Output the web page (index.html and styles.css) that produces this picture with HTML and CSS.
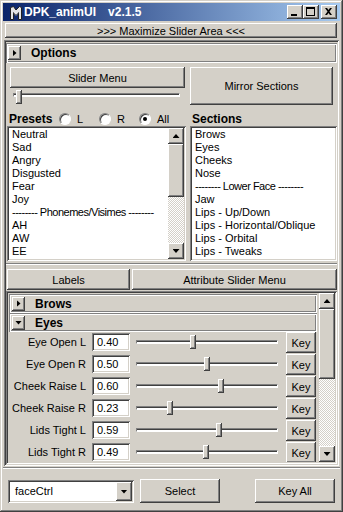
FILE: index.html
```html
<!DOCTYPE html>
<html lang="en">

<head>
    <meta charset="utf-8">
    <title>DPK_animUI v2.1.5</title>
    <link rel="stylesheet" href="styles.css">
</head>

<body>
    <div class="window">
        <!-- title bar -->
        <div class="titlebar">
            <svg class="app-icon" width="16" height="16" viewBox="0 0 16 16">
                <path d="M3.5 3.5 L6.5 2.5 L9 6 L12.5 2.5 L14.5 3.5 L14.5 15.5 L11.5 15.5 L11.5 8.5 L9 11.5 L6.5 8.5 L6.5 15.5 L3.5 15.5 Z" fill="#e4e4e4" stroke="#202020" stroke-width="1"/>
                <path d="M6.5 8.5 L9 11.5 L11.5 8.5" fill="none" stroke="#8a8a8a" stroke-width="1"/>
            </svg>
            <span class="title">DPK_animUI</span>
            <span class="title version">v2.1.5</span>
            <div class="caption">
                <span class="cap-btn">
                    <svg width="16" height="14" viewBox="0 0 16 14"><rect x="4" y="9" width="6" height="2" fill="#000"/></svg>
                </span>
                <span class="cap-btn">
                    <svg width="16" height="14" viewBox="0 0 16 14"><rect x="3.5" y="2.5" width="8" height="8" fill="none" stroke="#000"/><rect x="3" y="2" width="9" height="2" fill="#000"/></svg>
                </span>
                <span class="cap-btn close">
                    <svg width="16" height="14" viewBox="0 0 16 14"><path d="M4 3h2l1.5 2L9 3h2l-2.5 3.5L11 10H9L7.5 8 6 10H4l2.5-3.5z" fill="#000"/></svg>
                </span>
            </div>
        </div>

        <button class="btn maximize">&gt;&gt;&gt; Maximize Slider Area &lt;&lt;&lt;</button>

        <div class="pane">
            <!-- Options frame -->
            <div class="frame-head top-head">
                <span class="toggle"><i class="tri-right"></i></span>
                <b>Options</b>
            </div>
            <div class="options">
                <div class="opt-top">
                    <div class="opt-left">
                        <button class="btn slider-menu">Slider Menu</button>
                        <div class="trackbar wide">
                            <div class="track"></div>
                            <div class="thumb" style="left:6px"></div>
                        </div>
                    </div>
                    <button class="btn mirror">Mirror Sections</button>
                </div>

                <div class="list-cols">
                    <div class="list-col presets">
                        <div class="list-head">
                            <b class="head-label">Presets</b>
                            <span class="radio"><span class="circle"></span>L</span>
                            <span class="radio"><span class="circle"></span>R</span>
                            <span class="radio"><span class="circle on"></span>All</span>
                        </div>
                        <div class="listbox">
                            <ul class="items">
                                <li>Neutral</li>
                                <li>Sad</li>
                                <li>Angry</li>
                                <li>Disgusted</li>
                                <li>Fear</li>
                                <li>Joy</li>
                                <li class="sep">-------- Phonemes/Visimes --------</li>
                                <li>AH</li>
                                <li>AW</li>
                                <li>EE</li>
                            </ul>
                            <div class="vscroll list-scroll">
                                <span class="sb-btn"><i class="tri-up"></i></span>
                                <span class="sb-thumb"></span>
                                <span class="sb-track"></span>
                                <span class="sb-btn"><i class="tri-down"></i></span>
                            </div>
                        </div>
                    </div>
                    <div class="list-col sections">
                        <div class="list-head">
                            <b class="head-label">Sections</b>
                        </div>
                        <div class="listbox">
                            <ul class="items">
                                <li>Brows</li>
                                <li>Eyes</li>
                                <li>Cheeks</li>
                                <li>Nose</li>
                                <li class="sep">-------- Lower Face --------</li>
                                <li>Jaw</li>
                                <li>Lips - Up/Down</li>
                                <li>Lips - Horizontal/Oblique</li>
                                <li>Lips - Orbital</li>
                                <li>Lips - Tweaks</li>
                            </ul>
                        </div>
                    </div>
                </div>
            </div>

            <div class="tabs">
                <button class="btn tab-labels">Labels</button>
                <button class="btn tab-attr">Attribute Slider Menu</button>
            </div>

            <!-- slider area -->
            <div class="scroller">
                <div class="scroll-content">
                    <div class="frame-head sub-head">
                        <span class="toggle"><i class="tri-right"></i></span>
                        <b>Brows</b>
                    </div>
                    <div class="frame-head sub-head">
                        <span class="toggle"><i class="tri-down"></i></span>
                        <b>Eyes</b>
                    </div>

                    <div class="row">
                        <span class="row-label">Eye Open L</span>
                        <span class="field">0.40</span>
                        <div class="trackbar"><div class="track"></div><div class="thumb" style="left:54px"></div></div>
                        <button class="btn key">Key</button>
                    </div>
                    <div class="row">
                        <span class="row-label">Eye Open R</span>
                        <span class="field">0.50</span>
                        <div class="trackbar"><div class="track"></div><div class="thumb" style="left:68px"></div></div>
                        <button class="btn key">Key</button>
                    </div>
                    <div class="row">
                        <span class="row-label">Cheek Raise L</span>
                        <span class="field">0.60</span>
                        <div class="trackbar"><div class="track"></div><div class="thumb" style="left:82px"></div></div>
                        <button class="btn key">Key</button>
                    </div>
                    <div class="row">
                        <span class="row-label">Cheek Raise R</span>
                        <span class="field">0.23</span>
                        <div class="trackbar"><div class="track"></div><div class="thumb" style="left:31px"></div></div>
                        <button class="btn key">Key</button>
                    </div>
                    <div class="row">
                        <span class="row-label">Lids Tight L</span>
                        <span class="field">0.59</span>
                        <div class="trackbar"><div class="track"></div><div class="thumb" style="left:80px"></div></div>
                        <button class="btn key">Key</button>
                    </div>
                    <div class="row">
                        <span class="row-label">Lids Tight R</span>
                        <span class="field">0.49</span>
                        <div class="trackbar"><div class="track"></div><div class="thumb" style="left:67px"></div></div>
                        <button class="btn key">Key</button>
                    </div>
                </div>
                <div class="vscroll">
                    <span class="sb-btn"><i class="tri-up"></i></span>
                    <span class="sb-thumb big"></span>
                    <span class="sb-track"></span>
                    <span class="sb-btn"><i class="tri-down"></i></span>
                </div>
            </div>
        </div>

        <div class="divider"></div>

        <!-- bottom bar -->
        <div class="bottom">
            <div class="combo">
                <span class="combo-text">faceCtrl</span>
                <span class="sb-btn combo-btn"><i class="tri-down"></i></span>
            </div>
            <button class="btn select">Select</button>
            <button class="btn key-all">Key All</button>
        </div>
    </div>
</body>

</html>
```

FILE: styles.css
```css
body {
    margin: 0;
    background: #d4d0c8;
    font-family: "Liberation Sans", Arial, sans-serif;
    font-size: 11px;
    color: #000;
}

.window {
    width: 343px;
    height: 512px;
    box-sizing: border-box;
    padding: 3px;
    background: #d4d0c8;
    box-shadow: inset -1px -1px #404040, inset 1px 1px #d4d0c8, inset -2px -2px #808080, inset 2px 2px #fff;
    display: flex;
    flex-direction: column;
    overflow: hidden;
}

/* raised / sunken classic borders */
.btn,
.cap-btn,
.toggle,
.sb-btn,
.sb-thumb,
.thumb {
    background: #d4d0c8;
    box-shadow: inset -1px -1px #404040, inset 1px 1px #fff, inset -2px -2px #808080, inset 2px 2px #d4d0c8;
}

.listbox,
.field,
.combo,
.scroller,
.pane {
    box-shadow: inset 1px 1px #808080, inset -1px -1px #fff, inset 2px 2px #404040, inset -2px -2px #d4d0c8;
}

.btn {
    font: inherit;
    color: #000;
    border: 0;
    padding: 0;
    display: block;
    flex: none;
}

/* title bar */
.titlebar {
    height: 18px;
    flex: none;
    display: flex;
    align-items: center;
    background: linear-gradient(to right, #0a246a, #a6caf0);
    color: #fff;
    font-weight: bold;
    font-size: 12px;
}

.app-icon {
    margin: 0 1px 0 4px;
    flex: none;
}

.version {
    margin-left: 12px;
}

.caption {
    margin-left: auto;
    margin-right: 3px;
    display: flex;
}

.cap-btn {
    width: 16px;
    height: 14px;
    display: block;
}

.cap-btn svg {
    display: block;
}

.cap-btn.close {
    margin-left: 2px;
}

.maximize {
    margin: 2px 3px 0 2px;
    height: 15px;
    line-height: 14px;
}

/* main pane */
.pane {
    margin: 2px 1px 0 1px;
    height: 426px;
    box-sizing: border-box;
    padding: 2px;
    display: flex;
    flex-direction: column;
    flex: none;
}

.frame-head {
    display: flex;
    align-items: center;
    flex: none;
    box-shadow: inset 1px 1px #808080, inset -1px -1px #fff, inset 2px 2px #fff, inset -2px -2px #808080;
    font-size: 12px;
}

.frame-head b {
    margin-left: 10px;
}

.top-head {
    margin-top: 1px;
    height: 20px;
    padding-left: 2px;
}

.sub-head {
    margin: 0 2px 0 1px;
    height: 19px;
    padding-left: 3px;
}

.sub-head:first-child {
    margin-top: 1px;
}

.toggle {
    width: 13px;
    height: 14px;
    display: flex;
    align-items: center;
    justify-content: center;
    flex: none;
}

.tri-right {
    width: 4px;
    height: 7px;
    background: #000;
    clip-path: polygon(0 0, 100% 50%, 0 100%);
}

.tri-down {
    width: 7px;
    height: 4px;
    background: #000;
    clip-path: polygon(0 0, 100% 0, 50% 100%);
}

.tri-up {
    width: 7px;
    height: 4px;
    background: #000;
    clip-path: polygon(50% 0, 100% 100%, 0 100%);
}

/* options frame */
.options {
    height: 202px;
    box-sizing: border-box;
    flex: none;
    border-bottom: 1px solid #fff;
    box-shadow: inset 0 -1px #808080;
    padding-bottom: 2px;
}

.opt-top {
    display: flex;
    margin-top: 4px;
    padding-left: 4px;
    height: 38px;
}

.opt-left {
    width: 175px;
    display: flex;
    flex-direction: column;
}

.slider-menu {
    height: 21px;
}

.mirror {
    margin-left: 5px;
    width: 143px;
    height: 38px;
}

.trackbar {
    position: relative;
    height: 18px;
}

.trackbar.wide {
    height: 17px;
}

.track {
    height: 4px;
    box-sizing: border-box;
    border-top: 1px solid #808080;
    border-left: 1px solid #808080;
    border-bottom: 1px solid #fff;
    border-right: 1px solid #fff;
    box-shadow: inset 0 1px #404040;
    background: #fff;
    margin-top: 7px;
}

.trackbar.wide .track {
    margin: 5px 5px 0 3px;
}

.thumb {
    position: absolute;
    top: 2px;
    width: 6px;
    height: 14px;
}

.list-cols {
    display: flex;
    margin-top: 6px;
    padding-left: 1px;
}

.presets {
    width: 179px;
}

.sections {
    margin-left: 4px;
    flex: 1;
}

.list-head {
    height: 15px;
    display: flex;
    align-items: center;
    padding-left: 2px;
}

.head-label {
    font-size: 12px;
    width: 50px;
    flex: none;
}

.radio {
    display: flex;
    align-items: center;
    width: 40px;
    flex: none;
}

.circle {
    width: 12px;
    height: 12px;
    box-sizing: border-box;
    border-radius: 50%;
    background: #fff;
    border: 1px solid;
    border-color: #808080 #fff #fff #808080;
    box-shadow: inset 1px 1px #404040;
    margin-right: 6px;
    position: relative;
}

.circle.on::after {
    content: "";
    position: absolute;
    left: 3px;
    top: 3px;
    width: 4px;
    height: 4px;
    border-radius: 50%;
    background: #000;
}

.listbox {
    height: 135px;
    box-sizing: border-box;
    padding: 2px;
    background: #fff;
    display: flex;
}

.items {
    flex: 1;
    list-style: none;
    margin: 0;
    padding: 0 0 0 3px;
    line-height: 13px;
    white-space: nowrap;
    overflow: hidden;
}

.sep {
    letter-spacing: -0.5px;
}

/* scrollbars */
.vscroll {
    width: 16px;
    flex: none;
    display: flex;
    flex-direction: column;
}

.sb-btn {
    width: 16px;
    height: 16px;
    display: flex;
    align-items: center;
    justify-content: center;
    flex: none;
}

.sb-thumb {
    height: 53px;
    flex: none;
}

.sb-thumb.big {
    height: 70px;
}

.sb-track {
    flex: 1;
    background: repeating-conic-gradient(#fff 0% 25%, #d4d0c8 0% 50%) 0 0 / 2px 2px;
}

/* tab buttons */
.tabs {
    display: flex;
    margin-top: 4px;
    padding-left: 1px;
    height: 21px;
    flex: none;
}

.tab-labels {
    width: 123px;
}

.tab-attr {
    margin-left: 2px;
    flex: 1;
}

/* slider area */
.scroller {
    margin-top: 1px;
    flex: 1;
    min-height: 0;
    box-sizing: border-box;
    padding: 2px;
    display: flex;
    overflow: hidden;
}

.scroll-content {
    flex: 1;
    overflow: hidden;
}

.row {
    display: flex;
    align-items: flex-start;
    height: 22px;
}

.row-label {
    width: 80px;
    box-sizing: border-box;
    padding-right: 2px;
    text-align: right;
    line-height: 18px;
    margin-top: 1px;
    white-space: nowrap;
    flex: none;
}

.field {
    margin: 1px 0 0 4px;
    width: 38px;
    height: 18px;
    box-sizing: border-box;
    padding: 2px 0 0 5px;
    line-height: 14px;
    background: #fff;
    flex: none;
}

.row .trackbar {
    margin: 1px 0 0 6px;
    width: 142px;
    flex: none;
}

.key {
    margin-left: 8px;
    width: 30px;
    height: 21px;
}

/* bottom bar */
.divider {
    margin-top: 1px;
    height: 1px;
    background: #808080;
    border-bottom: 1px solid #fff;
    flex: none;
}

.bottom {
    flex: 1;
    display: flex;
    align-items: flex-start;
    padding: 10px 5px 0 5px;
}

.combo {
    margin-top: 1px;
    width: 126px;
    height: 23px;
    box-sizing: border-box;
    padding: 2px;
    background: #fff;
    display: flex;
}

.combo-text {
    flex: 1;
    padding-left: 5px;
    line-height: 19px;
}

.combo-btn {
    height: 19px;
}

.select {
    margin-left: 6px;
    width: 80px;
    height: 24px;
}

.key-all {
    margin-left: auto;
    width: 80px;
    height: 24px;
}
```
